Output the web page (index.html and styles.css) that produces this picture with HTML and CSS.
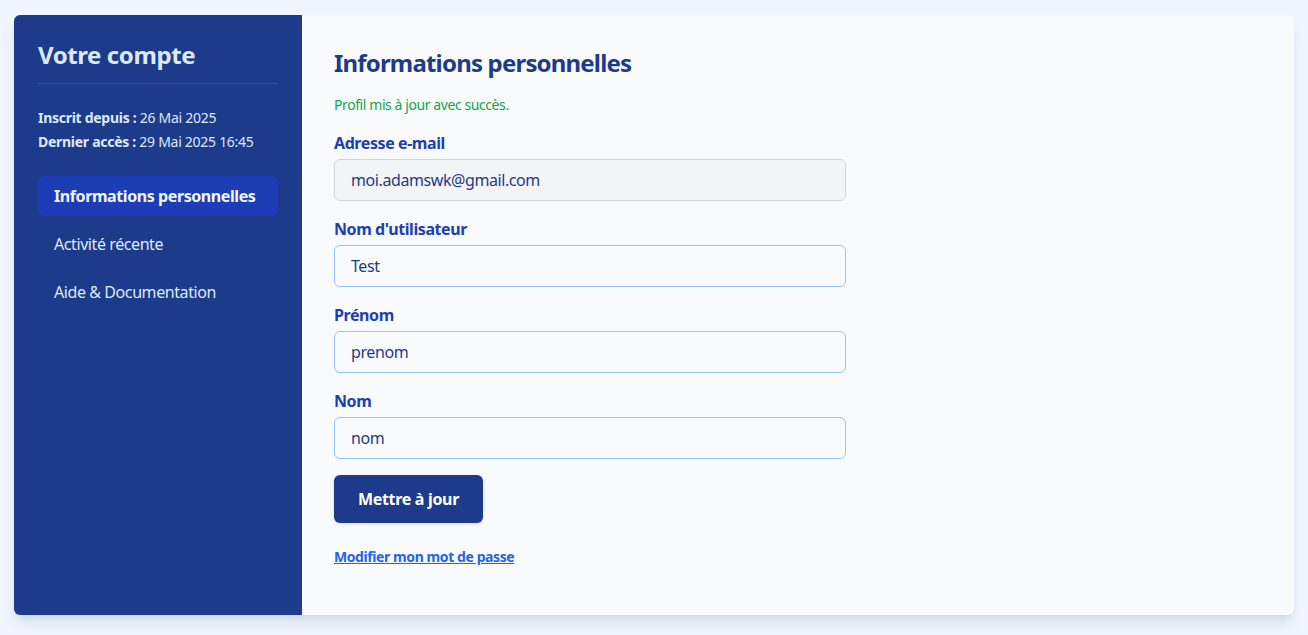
FILE: index.html
```html
<!DOCTYPE html>
<html lang="fr">
<head>
<meta charset="utf-8">
<title>Votre compte</title>
<link rel="stylesheet" href="styles.css">
</head>
<body>
<div class="page">
  <div class="card">
    <aside class="sidebar">
      <h2 class="side-title">Votre compte</h2>
      <div class="meta">
        <p><strong>Inscrit depuis :</strong> 26 Mai 2025</p>
        <p><strong>Dernier accès :</strong> 29 Mai 2025 16:45</p>
      </div>
      <nav class="nav">
        <a class="nav-item active" href="#">Informations personnelles</a>
        <a class="nav-item" href="#">Activité récente</a>
        <a class="nav-item" href="#">Aide &amp; Documentation</a>
      </nav>
    </aside>
    <main class="main">
      <h1 class="title">Informations personnelles</h1>
      <p class="success">Profil mis à jour avec succès.</p>
      <form class="form">
        <div class="field">
          <label class="label">Adresse e-mail</label>
          <input class="input readonly" type="text" value="moi.adamswk@gmail.com" readonly>
        </div>
        <div class="field">
          <label class="label">Nom d'utilisateur</label>
          <input class="input" type="text" value="Test">
        </div>
        <div class="field">
          <label class="label">Prénom</label>
          <input class="input" type="text" value="prenom">
        </div>
        <div class="field">
          <label class="label">Nom</label>
          <input class="input" type="text" value="nom">
        </div>
        <div class="actions">
          <button class="btn" type="button">Mettre à jour</button>
        </div>
      </form>
      <a class="link" href="#">Modifier mon mot de passe</a>
    </main>
  </div>
</div>
</body>
</html>
```

FILE: styles.css
```css
* { box-sizing: border-box; }
html, body { margin: 0; padding: 0; }
body {
  background: #eff6ff;
  font-family: "Noto Sans", "Open Sans", sans-serif;
  letter-spacing: -0.026em;
  color: #1e3a8a;
}
.page {
  padding: 15px 14px 20px 14px;
}
.card {
  display: flex;
  height: 600px;
  border-radius: 6px;
  overflow: hidden;
  box-shadow: 0 10px 15px -3px rgba(0,0,0,0.1), 0 4px 6px -4px rgba(0,0,0,0.1);
  background: #f8fafc;
}
.sidebar {
  width: 288px;
  flex-shrink: 0;
  background: #1e3a8a;
  padding: 24px;
  color: #dbeafe;
}
.side-title {
  margin: 0;
  font-size: 24px;
  line-height: 32px;
  font-weight: 700;
  color: #dbeafe;
  padding-bottom: 12px;
  border-bottom: 1px solid #1d4ed8;
}
.meta {
  margin-top: 22px;
  font-size: 14px;
  line-height: 24px;
  letter-spacing: -0.02em;
}
.meta p { margin: 0; }
.meta strong { color: #dbeafe; }
.nav {
  margin-top: 22px;
  display: flex;
  flex-direction: column;
  gap: 8px;
}
.nav-item {
  display: block;
  height: 40px;
  line-height: 40px;
  padding: 0 16px;
  border-radius: 6px;
  font-size: 16px;
  white-space: nowrap;
  color: #dbeafe;
  text-decoration: none;
}
.nav-item.active {
  background: #1d3db6;
  font-weight: 700;
  color: #eff6ff;
}
.main {
  flex: 1;
  padding: 32px;
}
.title {
  margin: 0 0 16px 0;
  font-size: 24px;
  line-height: 30px;
  padding-top: 1px;
  padding-bottom: 1px;
  font-weight: 700;
  letter-spacing: -0.034em;
  color: #1e3a8a;
}
.success {
  margin: 0 0 16px 0;
  font-size: 14px;
  line-height: 20px;
  color: #16a34a;
}
.form {
  max-width: 512px;
  display: flex;
  flex-direction: column;
  gap: 16px;
}
.field { display: flex; flex-direction: column; }
.label {
  font-size: 16px;
  line-height: 24px;
  font-weight: 700;
  color: #1e40af;
  margin-bottom: 4px;
}
.input {
  height: 42px;
  border: 1px solid #93c5fd;
  border-radius: 6px;
  padding: 0 16px;
  font-family: inherit;
  letter-spacing: inherit;
  font-size: 16px;
  color: #1e3a8a;
  background: #f8fafc;
  outline: none;
}
.input.readonly {
  background: #f3f4f6;
  border-color: #d1d5db;
}
.actions { display: flex; }
.btn {
  height: 48px;
  padding: 0 24px;
  border: none;
  border-radius: 6px;
  background: #1e3a8a;
  color: #ffffff;
  font-family: inherit;
  letter-spacing: -0.02em;
  font-size: 16px;
  font-weight: 700;
  box-shadow: 0 1px 3px rgba(0,0,0,0.15);
}
.link {
  display: inline-block;
  margin-top: 24px;
  font-size: 14px;
  line-height: 20px;
  font-weight: 700;
  color: #2563eb;
  text-decoration: underline;
}
```
